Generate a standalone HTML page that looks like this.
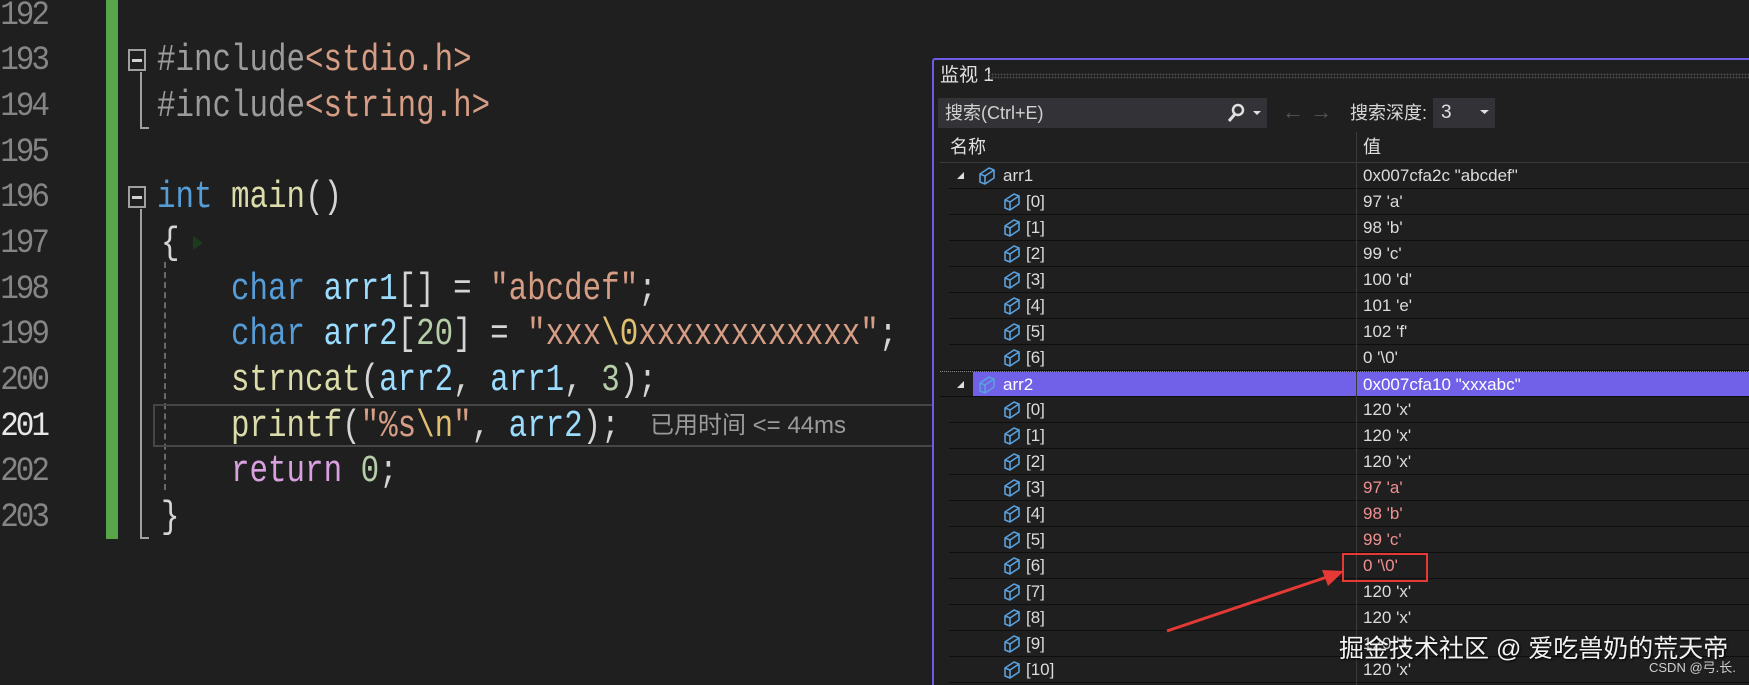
<!DOCTYPE html>
<html><head><meta charset="utf-8">
<style>
*{margin:0;padding:0;box-sizing:border-box}
body{width:1749px;height:685px;background:#1f1f1f;position:relative;overflow:hidden;font-family:"Liberation Sans","Noto Sans CJK SC",sans-serif}
.ln{position:absolute;left:0;width:47px;text-align:right;color:#858585;font-family:"Liberation Mono",monospace;font-size:31px;height:46px;line-height:46px;letter-spacing:-3px;transform:scaleY(1.12)}
.cl{position:absolute;left:157px;height:46px;line-height:46px;font-family:"Liberation Mono",monospace;font-size:34px;white-space:pre;transform:scale(0.907,1.12);transform-origin:left center;color:#d4d4d4}
.k{color:#569cd6}.v{color:#9cdcfe}.s{color:#d69d85}.f{color:#dcdcaa}.n{color:#b5cea8}.p{color:#9b9b9b}.r{color:#d8a0df}.e{color:#e0c070}
.abs{position:absolute}
.row{position:absolute;left:949px;right:0;height:26px;border-bottom:1px solid #0e0e0e;font-size:17px;color:#dcdcdc;line-height:25px}
.row .nm{position:absolute;left:77px}
.row .vl{position:absolute;left:414px}
.row .ic{position:absolute;left:53px;top:4px}
.red{color:#f09090}
</style></head><body>
<div class="abs" style="left:106px;top:0;width:12px;height:539px;background:#57a64a"></div>
<div class="ln" style="top:-7px">192</div>
<div class="ln" style="top:38px">193</div>
<div class="ln" style="top:84px">194</div>
<div class="ln" style="top:130px">195</div>
<div class="ln" style="top:175px">196</div>
<div class="ln" style="top:221px">197</div>
<div class="ln" style="top:267px">198</div>
<div class="ln" style="top:312px">199</div>
<div class="ln" style="top:358px">200</div>
<div class="ln" style="top:404px;color:#e8e8e8">201</div>
<div class="ln" style="top:449px">202</div>
<div class="ln" style="top:495px">203</div>
<div class="abs" style="left:128px;top:49px;width:18px;height:22px;border:2px solid #a0a0a0"></div>
<div class="abs" style="left:132px;top:59px;width:10px;height:3px;background:#d0d0d0"></div>
<div class="abs" style="left:140px;top:72px;width:2px;height:57px;background:#a0a0a0"></div>
<div class="abs" style="left:140px;top:127px;width:9px;height:2px;background:#a0a0a0"></div>
<div class="abs" style="left:128px;top:186px;width:18px;height:22px;border:2px solid #a0a0a0"></div>
<div class="abs" style="left:132px;top:196px;width:10px;height:3px;background:#d0d0d0"></div>
<div class="abs" style="left:140px;top:209px;width:2px;height:330px;background:#a0a0a0"></div>
<div class="abs" style="left:140px;top:537px;width:9px;height:2px;background:#a0a0a0"></div>
<div class="abs" style="left:164px;top:262px;width:0;height:228px;border-left:2px dashed #6a6a6a"></div>
<div class="abs" style="left:153px;top:404px;width:790px;height:43px;border:2px solid #464646;border-right:none"></div>
<div class="cl" style="top:38px"><span class="p">#include</span><span class="s">&lt;stdio.h&gt;</span></div>
<div class="cl" style="top:84px"><span class="p">#include</span><span class="s">&lt;string.h&gt;</span></div>
<div class="cl" style="top:175px"><span class="k">int</span> <span class="f">main</span>()</div>
<div class="cl" style="top:221px;left:161px">{</div>
<div class="abs" style="left:193px;top:236px;width:0;height:0;border-left:10px solid #1e3a1e;border-top:7px solid transparent;border-bottom:7px solid transparent"></div>
<div class="cl" style="top:267px">    <span class="k">char</span> <span class="v">arr1</span>[] = <span class="s">"abcdef"</span>;</div>
<div class="cl" style="top:312px">    <span class="k">char</span> <span class="v">arr2</span>[<span class="n">20</span>] = <span class="s">"xxx</span><span class="e">\0</span><span class="s">xxxxxxxxxxxx"</span>;</div>
<div class="cl" style="top:358px">    <span class="f">strncat</span>(<span class="v">arr2</span>, <span class="v">arr1</span>, <span class="n">3</span>);</div>
<div class="cl" style="top:404px">    <span class="f">printf</span>(<span class="s">"%s</span><span class="e">\n</span><span class="s">"</span>, <span class="v">arr2</span>);</div>
<div class="abs" style="left:650px;top:411px;color:#9a9a9a;font-size:24px;line-height:30px">已用时间 &lt;= 44ms</div>
<div class="cl" style="top:449px">    <span class="r">return</span> <span class="n">0</span>;</div>
<div class="cl" style="top:495px;left:161px">}</div>

<div class="abs" style="left:932px;top:58px;right:0;bottom:0;background:#1f1f1f;border-left:2px solid #6c5ce7;border-top:2px solid #6c5ce7;border-top-left-radius:3px"></div>
<div class="abs" style="left:940px;top:64px;color:#e0e0e0;font-size:19px;line-height:24px">监视 1</div>
<div class="abs" style="left:988px;top:73px;right:0;height:6px;background-image:radial-gradient(#4a4a4a 0.8px,transparent 1px);background-size:3px 3px"></div>
<div class="abs" style="left:938px;top:98px;width:329px;height:30px;background:#333337"></div>
<div class="abs" style="left:945px;top:101px;color:#d0d0d0;font-size:18px;line-height:24px">搜索(Ctrl+E)</div>
<svg class="abs" style="left:1224px;top:102px" width="46" height="22"><circle cx="14" cy="8" r="5" fill="none" stroke="#e0e0e0" stroke-width="2.5"/><line x1="11" y1="12" x2="5" y2="19" stroke="#e0e0e0" stroke-width="3"/><path d="M29 9h8l-4 4z" fill="#e0e0e0"/></svg>
<div class="abs" style="left:1282px;top:99px;color:#555;font-size:22px;line-height:26px">←&nbsp;→</div>
<div class="abs" style="left:1350px;top:101px;color:#d8d8d8;font-size:18px;line-height:24px">搜索深度:</div>
<div class="abs" style="left:1433px;top:98px;width:62px;height:30px;background:#333337"></div>
<div class="abs" style="left:1441px;top:101px;color:#e0e0e0;font-size:19px;line-height:24px">3</div>
<svg class="abs" style="left:1479px;top:108px" width="12" height="8"><path d="M1 2h9l-4.5 4z" fill="#e0e0e0"/></svg>
<div class="abs" style="left:940px;top:132px;right:0;height:31px;border-bottom:1px solid #3a3a3a"></div>
<div class="abs" style="left:950px;top:135px;color:#e0e0e0;font-size:18px;line-height:24px">名称</div>
<div class="abs" style="left:1363px;top:135px;color:#e0e0e0;font-size:18px;line-height:24px">值</div>
<div class="abs" style="left:1356px;top:132px;width:1px;bottom:0;background:#3a3a3a"></div>
<svg width="0" height="0" style="position:absolute"><defs><symbol id="cube" viewBox="0 0 20 20"><path d="M3 8 L12 2 L17 4 L17 12 L8 18 L3 16 Z M3 8 L8 10 L17 4 M8 10 L8 18" fill="none" stroke="#5aa0dc" stroke-width="1.6" stroke-linejoin="round"/></symbol></defs></svg>

<div class="row" style="top:163px"><svg class="abs" style="left:8px;top:9px" width="8" height="8"><path d="M7 0V7H0z" fill="#ddd"/></svg><svg class="ic" style="left:28px;top:2px" width="20" height="22"><use href="#cube"/></svg><span class="nm" style="left:54px">arr1</span><span class="vl">0x007cfa2c "abcdef"</span></div>
<div class="row" style="top:189px"><svg class="ic" width="20" height="22" style="top:2px"><use href="#cube"/></svg><span class="nm">[0]</span><span class="vl">97 'a'</span></div>
<div class="row" style="top:215px"><svg class="ic" width="20" height="22" style="top:2px"><use href="#cube"/></svg><span class="nm">[1]</span><span class="vl">98 'b'</span></div>
<div class="row" style="top:241px"><svg class="ic" width="20" height="22" style="top:2px"><use href="#cube"/></svg><span class="nm">[2]</span><span class="vl">99 'c'</span></div>
<div class="row" style="top:267px"><svg class="ic" width="20" height="22" style="top:2px"><use href="#cube"/></svg><span class="nm">[3]</span><span class="vl">100 'd'</span></div>
<div class="row" style="top:293px"><svg class="ic" width="20" height="22" style="top:2px"><use href="#cube"/></svg><span class="nm">[4]</span><span class="vl">101 'e'</span></div>
<div class="row" style="top:319px"><svg class="ic" width="20" height="22" style="top:2px"><use href="#cube"/></svg><span class="nm">[5]</span><span class="vl">102 'f'</span></div>
<div class="row" style="top:345px"><svg class="ic" width="20" height="22" style="top:2px"><use href="#cube"/></svg><span class="nm">[6]</span><span class="vl">0 '\0'</span></div>
<div class="row" style="top:371px;left:940px;border-top:1px dotted #888"><div class="abs" style="left:33px;right:0;top:0;bottom:0;background:#7160e8"></div><svg class="abs" style="left:17px;top:9px" width="8" height="8"><path d="M7 0V7H0z" fill="#ddd"/></svg><svg class="ic" style="left:37px;top:2px" width="20" height="22"><use href="#cube"/></svg><span class="nm" style="left:63px;color:#fff">arr2</span><div class="abs" style="left:416px;top:0;width:1px;height:26px;background:#222"></div><span class="vl" style="left:423px;color:#fff">0x007cfa10 "xxxabc"</span></div>
<div class="row" style="top:397px"><svg class="ic" width="20" height="22" style="top:2px"><use href="#cube"/></svg><span class="nm">[0]</span><span class="vl">120 'x'</span></div>
<div class="row" style="top:423px"><svg class="ic" width="20" height="22" style="top:2px"><use href="#cube"/></svg><span class="nm">[1]</span><span class="vl">120 'x'</span></div>
<div class="row" style="top:449px"><svg class="ic" width="20" height="22" style="top:2px"><use href="#cube"/></svg><span class="nm">[2]</span><span class="vl">120 'x'</span></div>
<div class="row" style="top:475px"><svg class="ic" width="20" height="22" style="top:2px"><use href="#cube"/></svg><span class="nm">[3]</span><span class="vl red">97 'a'</span></div>
<div class="row" style="top:501px"><svg class="ic" width="20" height="22" style="top:2px"><use href="#cube"/></svg><span class="nm">[4]</span><span class="vl red">98 'b'</span></div>
<div class="row" style="top:527px"><svg class="ic" width="20" height="22" style="top:2px"><use href="#cube"/></svg><span class="nm">[5]</span><span class="vl red">99 'c'</span></div>
<div class="row" style="top:553px"><svg class="ic" width="20" height="22" style="top:2px"><use href="#cube"/></svg><span class="nm">[6]</span><span class="vl red">0 '\0'</span></div>
<div class="row" style="top:579px"><svg class="ic" width="20" height="22" style="top:2px"><use href="#cube"/></svg><span class="nm">[7]</span><span class="vl">120 'x'</span></div>
<div class="row" style="top:605px"><svg class="ic" width="20" height="22" style="top:2px"><use href="#cube"/></svg><span class="nm">[8]</span><span class="vl">120 'x'</span></div>
<div class="row" style="top:631px"><svg class="ic" width="20" height="22" style="top:2px"><use href="#cube"/></svg><span class="nm">[9]</span><span class="vl">120 'x'</span></div>
<div class="row" style="top:657px"><svg class="ic" width="20" height="22" style="top:2px"><use href="#cube"/></svg><span class="nm">[10]</span><span class="vl">120 'x'</span></div>
<div class="abs" style="left:1356px;top:163px;width:1px;bottom:0;background:#3a3a3a"></div>
<div class="abs" style="left:1342px;top:553px;width:86px;height:29px;border:2px solid #e53935"></div>
<svg class="abs" style="left:0;top:0" width="1749" height="685"><path d="M1167 631 L1330 576" stroke="#e53935" stroke-width="3"/><path d="M1344 571 L1322 570 L1328 586 Z" fill="#e53935"/></svg>
<div class="abs" style="left:1339px;top:633px;color:#f2f2f2;font-size:25px;line-height:32px;text-shadow:1px 1px 2px #000">掘金技术社区 @ 爱吃兽奶的荒天帝</div>
<div class="abs" style="left:1649px;top:660px;color:#cfcfcf;font-size:13px;line-height:16px">CSDN @弓.长.</div>
</body></html>
